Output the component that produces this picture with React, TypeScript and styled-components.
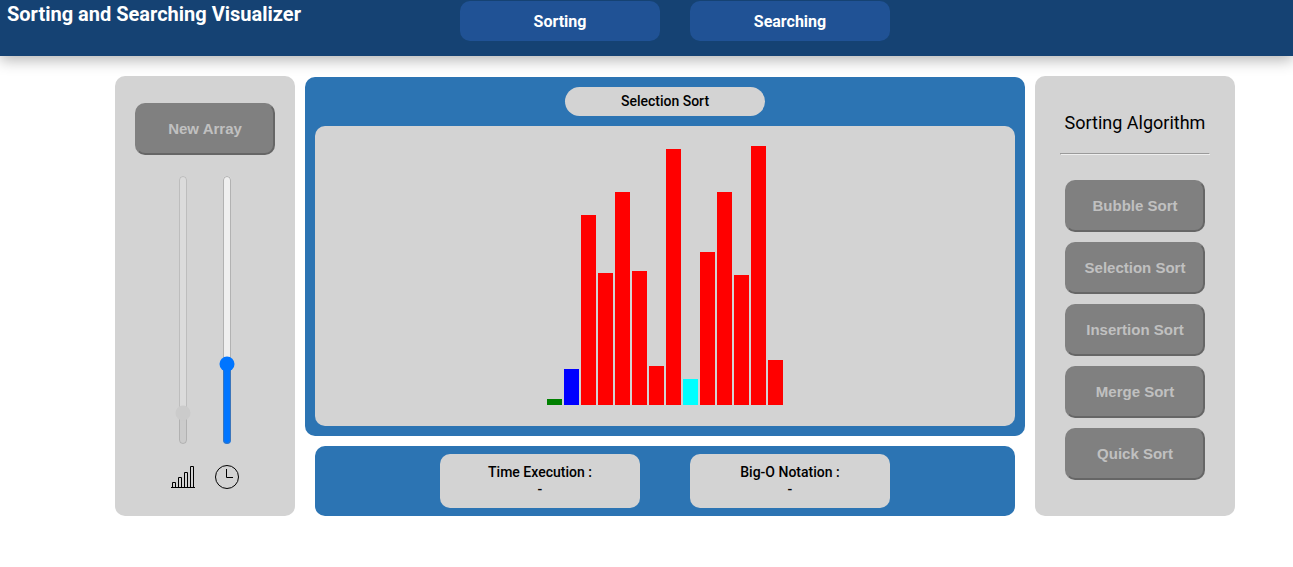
import React, { useState } from 'react';
import styled, { createGlobalStyle } from 'styled-components';

const GlobalStyle = createGlobalStyle`
  * { box-sizing: border-box; }
  body {
    margin: 0;
    background: #fff;
    color: #000;
    font-family: Roboto, "Liberation Sans", sans-serif;
  }
  h1, h2, p, dl, dd { margin: 0; }
`;

const Header = styled.header`
  display: flex;
  align-items: flex-start;
  height: 56px;
  background: #154273;
  box-shadow: 0 4px 14px rgba(0, 0, 0, 0.3);

  &::after {
    content: '';
    flex: 1 1 0;
  }
`;

const Title = styled.h1`
  flex: 1 1 57px;
  padding-left: 7px;
  color: #fff;
  font-size: 20px;
  line-height: 28px;
  font-weight: 700;
  white-space: nowrap;
`;

const Nav = styled.nav`
  display: flex;
  gap: 30px;
  padding-top: 1px;
`;

const NavButton = styled.button`
  width: 200px;
  height: 40px;
  padding: 2px 0 0;
  border: 0;
  border-radius: 10px;
  background: #205295;
  color: #fff;
  font: 700 16px/20px Roboto, "Liberation Sans", sans-serif;
`;

const Page = styled.main`
  display: flex;
  align-items: stretch;
  gap: 10px;
  width: calc(100% - 57px);
  max-width: 1120px;
  margin: 20px auto 0;
`;

const PageFrame = styled.div`
  padding-left: 57px;
`;

const SidePanel = styled.aside<{ $width: number; $top: number }>`
  display: flex;
  flex-direction: column;
  align-items: center;
  flex: 0 0 ${(p) => p.$width}px;
  padding: ${(p) => p.$top}px 20px 27px;
  border-radius: 10px;
  background: lightgray;
`;

const ActionButton = styled.button`
  width: 140px;
  height: 52px;
  padding: 0;
  border: 2px solid;
  border-color: gray #666 #666 gray;
  border-radius: 10px;
  background: gray;
  color: #c0c0c0;
  font: 700 15px/20px "Liberation Sans", Arial, sans-serif;
`;

const Sliders = styled.div`
  display: flex;
  gap: 20px;
  margin-top: 20px;
`;

const SliderField = styled.label`
  display: flex;
  flex-direction: column;
  align-items: center;
  gap: 20px;
  width: 24px;
`;

const Slider = styled.input`
  width: 16px;
  height: 270px;
  margin: 0;
  writing-mode: vertical-lr;
  direction: rtl;
`;

const Icon = styled.svg`
  display: block;
  width: 24px;
  height: 24px;
  fill: none;
  stroke: #000;
  stroke-width: 1;
`;

const Center = styled.div`
  display: flex;
  flex-direction: column;
  gap: 10px;
  flex: 1;
  min-width: 0;
  padding-top: 1px;
`;

const Board = styled.section`
  display: flex;
  flex-direction: column;
  align-items: center;
  gap: 10px;
  padding: 10px;
  border-radius: 10px;
  background: #2c74b3;
`;

const Current = styled.h2`
  width: 200px;
  padding: 6px 0;
  border-radius: 15px;
  background: lightgray;
  font-size: 14px;
  line-height: 17px;
  font-weight: 500;
  text-align: center;
`;

const Chart = styled.div`
  display: flex;
  align-items: flex-end;
  justify-content: center;
  gap: 2px;
  width: 100%;
  height: 300px;
  padding-bottom: 21px;
  border-radius: 10px;
  background: lightgray;
`;

const Bar = styled.div<{ $color: string }>`
  width: 15px;
  background: ${(p) => p.$color};
`;

const Results = styled.dl`
  display: flex;
  justify-content: center;
  gap: 50px;
  margin: 0 10px;
  padding: 8px 0;
  border-radius: 10px;
  background: #2c74b3;
`;

const Result = styled.div`
  width: 200px;
  padding: 10px 0;
  border-radius: 10px;
  background: lightgray;
  font-size: 14px;
  line-height: 17px;
  font-weight: 500;
  text-align: center;
`;

const PanelTitle = styled.h2`
  font-size: 18px;
  line-height: 22px;
  font-weight: 400;
  white-space: nowrap;
`;

const Divider = styled.hr`
  width: 150px;
  margin: 19px 0 25px;
  border: 1px inset #eee;
`;

const ButtonList = styled.div`
  display: flex;
  flex-direction: column;
  gap: 10px;
`;

const values = [6, 36, 190, 132, 213, 134, 39, 256, 26, 153, 213, 130, 259, 45];
const barColors: Record<number, string> = { 0: 'green', 1: 'blue', 8: 'cyan' };
const algorithms = ['Bubble Sort', 'Selection Sort', 'Insertion Sort', 'Merge Sort', 'Quick Sort'];

function BarsIcon() {
  return (
    <Icon viewBox="0 0 24 24" aria-hidden="true">
      <path d="M0 22.5H24M1.5 22V17.5H4.5V22M7.5 22V12.5H10.5V22M13.5 22V7.5H16.5V22M19.5 22V1.5H22.5V22" />
    </Icon>
  );
}

function ClockIcon() {
  return (
    <Icon viewBox="0 0 24 24" aria-hidden="true">
      <circle cx="12" cy="12" r="11.5" />
      <path d="M11.5 4V12.5H18" />
    </Icon>
  );
}

export default function App() {
  const [delay, setDelay] = useState(286);

  return (
    <>
      <GlobalStyle />
      <Header>
        <Title>Sorting and Searching Visualizer</Title>
        <Nav>
          <NavButton type="button">Sorting</NavButton>
          <NavButton type="button">Searching</NavButton>
        </Nav>
      </Header>
      <PageFrame>
        <Page>
          <SidePanel $width={180} $top={27}>
            <ActionButton type="button" disabled>New Array</ActionButton>
            <Sliders>
              <SliderField>
                <Slider type="range" min={0} max={1000} defaultValue={93} disabled aria-label="Array size" />
                <BarsIcon />
              </SliderField>
              <SliderField>
                <Slider
                  type="range"
                  min={0}
                  max={1000}
                  value={delay}
                  onChange={(e) => setDelay(Number(e.target.value))}
                  aria-label="Delay"
                />
                <ClockIcon />
              </SliderField>
            </Sliders>
          </SidePanel>
          <Center>
            <Board>
              <Current>Selection Sort</Current>
              <Chart>
                {values.map((value, i) => (
                  <Bar key={i} $color={barColors[i] ?? 'red'} style={{ height: value }} />
                ))}
              </Chart>
            </Board>
            <Results>
              <Result>
                <dt>Time Execution :</dt>
                <dd>-</dd>
              </Result>
              <Result>
                <dt>Big-O Notation :</dt>
                <dd>-</dd>
              </Result>
            </Results>
          </Center>
          <SidePanel $width={200} $top={36}>
            <PanelTitle>Sorting Algorithm</PanelTitle>
            <Divider />
            <ButtonList>
              {algorithms.map((name) => (
                <ActionButton key={name} type="button" disabled>{name}</ActionButton>
              ))}
            </ButtonList>
          </SidePanel>
        </Page>
      </PageFrame>
    </>
  );
}
